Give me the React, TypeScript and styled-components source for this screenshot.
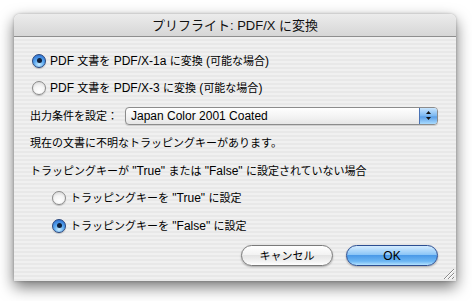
import React from "react";
import styled, { createGlobalStyle } from "styled-components";

const GlobalStyle = createGlobalStyle`
    html, body {
        margin: 0;
        padding: 0;
        background: #fff;
    }
    body {
        font-family: "Liberation Sans", "Noto Sans CJK JP", sans-serif;
        color: #000;
    }
`;

const Stage = styled.div`
    width: 472px;
    height: 301px;
    padding: 14px 16px 0 14px;
    box-sizing: border-box;
    overflow: hidden;
`;

const Window = styled.div`
    position: relative;
    width: 442px;
    height: 267px;
    border-radius: 6px 6px 0 0;
    box-shadow: 0 6px 15px rgba(0, 0, 0, 0.55), 0 0 3px rgba(0, 0, 0, 0.25);
    display: flex;
    flex-direction: column;
    overflow: hidden;
`;

const TitleBar = styled.div`
    height: 22px;
    flex: none;
    display: flex;
    align-items: center;
    justify-content: center;
    background: linear-gradient(#ececec, #d6d6d6);
    border-bottom: 1px solid #8e8e8e;
    font-size: 13px;
    line-height: 1;
    color: #111;
`;

const Content = styled.div`
    flex: 1;
    padding: 10px 18px 15px 16px;
    background: repeating-linear-gradient(#f0f0f0 0 2px, #e8e8e8 2px 4px);
    display: flex;
    flex-direction: column;
`;

const Row = styled.div<{ $indent?: number }>`
    height: 27.5px;
    display: flex;
    align-items: center;
    padding-left: ${(p) => p.$indent ?? 0}px;
    font-size: 12px;
    line-height: 1;
    white-space: pre;
`;

const Text = styled.span`
    white-space: pre;
`;

const Jp = styled.span<{ $size?: number }>`
    font-family: "Noto Sans CJK JP", sans-serif;
    font-size: ${(p) => p.$size ?? 11}px;
`;

const Radio = styled.span<{ $on?: boolean }>`
    width: 14px;
    height: 14px;
    box-sizing: border-box;
    border-radius: 50%;
    margin-right: 4px;
    flex: none;
    display: flex;
    align-items: center;
    justify-content: center;
    border: 1px solid ${(p) => (p.$on ? "#27457c" : "#8a8a8a")};
    background: ${(p) =>
        p.$on
            ? "radial-gradient(circle at 50% 80%, #c8ecff 0%, #5aa8f0 45%, #2462c8 100%)"
            : "radial-gradient(circle at 50% 75%, #ffffff 0%, #f4f4f4 50%, #cfcfcf 100%)"};
    box-shadow: 0 1px 1px rgba(0, 0, 0, 0.2);

    &::after {
        content: "";
        display: ${(p) => (p.$on ? "block" : "none")};
        width: 5px;
        height: 5px;
        border-radius: 50%;
        background: #10203a;
    }
`;

const Label = styled.span`
    margin-right: 7px;
`;

const Popup = styled.div`
    width: 313px;
    height: 18px;
    box-sizing: border-box;
    border: 1px solid #8c8c8c;
    border-radius: 4px;
    background: linear-gradient(#ffffff, #f2f2f2 60%, #e6e6e6);
    display: flex;
    align-items: center;
    overflow: hidden;
    box-shadow: 0 1px 1px rgba(0, 0, 0, 0.15);
`;

const PopupText = styled.span`
    flex: 1;
    padding-left: 5px;
    font-size: 12px;
`;

const PopupArrows = styled.span`
    width: 17px;
    height: 100%;
    flex: none;
    display: flex;
    align-items: center;
    justify-content: center;
    border-left: 1px solid #4a73b5;
    background: linear-gradient(#c9e6ff, #78b6f0 50%, #5a9ee6 55%, #a9dbff);
`;

const Buttons = styled.div`
    margin-top: 5.5px;
    display: flex;
    justify-content: flex-end;
    gap: 13px;
`;

const Button = styled.div<{ $primary?: boolean }>`
    width: 92px;
    height: 21px;
    box-sizing: border-box;
    border-radius: 11px;
    display: flex;
    align-items: center;
    justify-content: center;
    font-size: 12px;
    line-height: 1;
    border: 1px solid ${(p) => (p.$primary ? "#2c4e92" : "#7a7a7a")};
    background: ${(p) =>
        p.$primary
            ? "linear-gradient(#d4ecff 0%, #8cc6f7 45%, #4b9ae8 50%, #6cb6f3 80%, #b4e2ff 100%)"
            : "linear-gradient(#ffffff 0%, #f3f3f3 45%, #e4e4e4 50%, #f2f2f2 80%, #ffffff 100%)"};
    box-shadow: 0 1px 2px rgba(0, 0, 0, 0.3);
`;

const Grip = styled.svg`
    position: absolute;
    right: 1px;
    bottom: 1px;
`;

function mixed(text: string, size?: number): JSX.Element {
    const parts = text.split(/([\u3000-\u30ff\u4e00-\u9fff\uff00-\uffef]+)/);
    return (
        <Text>
            {parts.map((part, i) =>
                i % 2 ? (
                    <Jp key={i} $size={size}>
                        {part}
                    </Jp>
                ) : (
                    part
                )
            )}
        </Text>
    );
}

function ArrowsIcon(): JSX.Element {
    return (
        <svg width="7" height="11" viewBox="0 0 7 11">
            <path d="M3.5 1 L6 4 L1 4 Z" fill="#111" />
            <path d="M3.5 10 L6 7 L1 7 Z" fill="#111" />
        </svg>
    );
}

export default function App(): JSX.Element {
    return (
        <Stage>
            <GlobalStyle />
            <Window>
                <TitleBar>{mixed("プリフライト: PDF/X に変換", 13)}</TitleBar>
                <Content>
                    <Row $indent={2}>
                        <Radio $on />
                        {mixed("PDF 文書を PDF/X-1a に変換 (可能な場合)")}
                    </Row>
                    <Row $indent={2}>
                        <Radio />
                        {mixed("PDF 文書を PDF/X-3 に変換 (可能な場合)")}
                    </Row>
                    <Row>
                        <Label>{mixed("出力条件を設定：")}</Label>
                        <Popup>
                            <PopupText>Japan Color 2001 Coated</PopupText>
                            <PopupArrows>
                                <ArrowsIcon />
                            </PopupArrows>
                        </Popup>
                    </Row>
                    <Row>{mixed("現在の文書に不明なトラッピングキーがあります。")}</Row>
                    <Row>
                        {mixed('トラッピングキーが "True" または "False" に設定されていない場合')}
                    </Row>
                    <Row $indent={22}>
                        <Radio />
                        {mixed('トラッピングキーを "True" に設定')}
                    </Row>
                    <Row $indent={22}>
                        <Radio $on />
                        {mixed('トラッピングキーを "False" に設定')}
                    </Row>
                    <Buttons>
                        <Button>{mixed("キャンセル")}</Button>
                        <Button $primary>OK</Button>
                    </Buttons>
                </Content>
                <Grip width="13" height="13" viewBox="0 0 13 13">
                    <path d="M2 12 L12 2 M6 12 L12 6 M10 12 L12 10" stroke="#8a8a8a" strokeWidth="1" />
                    <path d="M3 12 L12 3 M7 12 L12 7" stroke="#ffffff" strokeWidth="1" />
                </Grip>
            </Window>
        </Stage>
    );
}
